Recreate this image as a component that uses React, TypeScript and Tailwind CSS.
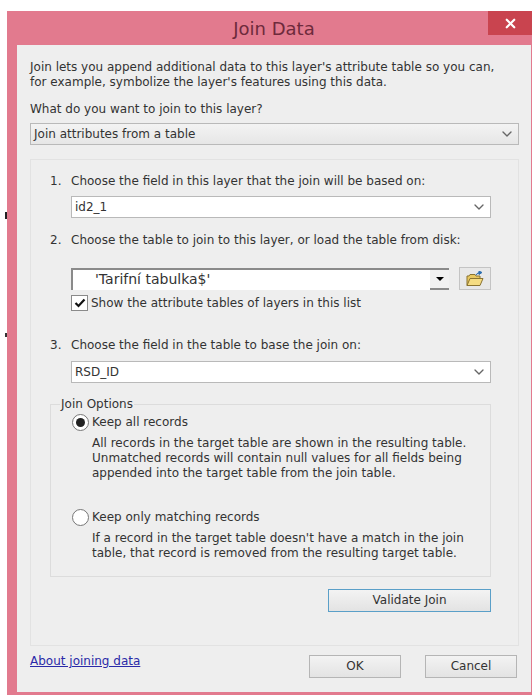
import { ChevronDown, X } from 'lucide-react';

const font = { fontFamily: '"DejaVu Sans", sans-serif' };

function Combo({ value, className = '' }: { value: string; className?: string }) {
  return (
    <div className={`flex h-[22px] items-center justify-between border border-[#b9b9b9] pl-[3px] pr-[3px] ${className}`}>
      <span>{value}</span>
      <ChevronDown size={16} strokeWidth={2} className="text-[#666]" />
    </div>
  );
}

function FolderIcon() {
  return (
    <svg width="18" height="16" viewBox="0 0 18 16">
      <path d="M1 14.500V5h2l1-1.500h5L10 5h4v2" fill="#e8c860" stroke="#8a7330" strokeWidth="1" />
      <path d="M1 14.500 4 7.500h13l-3 7z" fill="#f5dc82" stroke="#8a7330" strokeWidth="1" />
      <path d="M10 4c1-2 3-2.500 4.500-2.500M13 0l3 1.500-3 2z" fill="#2d6fb0" stroke="#2d6fb0" strokeWidth="1" />
    </svg>
  );
}

function Radio({ checked }: { checked?: boolean }) {
  return (
    <span className="flex h-[17px] w-[17px] shrink-0 items-center justify-center rounded-full border border-[#777] bg-white">
      {checked ? <span className="h-[9px] w-[9px] rounded-full bg-[#222]" /> : null}
    </span>
  );
}

function Button({ label, className = '' }: { label: string; className?: string }) {
  return (
    <button
      type="button"
      className={`flex h-[23px] items-center justify-center border bg-gradient-to-b from-[#f3f3f3] to-[#e3e3e3] ${className}`}
    >
      {label}
    </button>
  );
}

export default function App() {
  return (
    <div style={font} className="relative h-[695px] w-[532px] overflow-hidden bg-white pl-[7px] pt-[11px] text-[12px] leading-[15px] text-[#333]">
      {/* stray marks left of the window edge */}
      <span className="absolute left-[5px] top-[212px] h-[7px] w-[2px] bg-[#222]" />
      <span className="absolute left-[5px] top-[333px] h-[4px] w-[2px] bg-[#333]" />

      <div className="flex h-[684px] w-[525px] flex-col bg-[#e27a8e] pb-[3px] pl-[10px] pr-[1px]">
        {/* title bar */}
        <div className="relative flex h-[34px] shrink-0 items-center justify-center pt-[1px] text-[18px] text-[#6e2a3c]">
          Join Data
          <div className="absolute right-[-1px] top-0 flex h-[24px] w-[44px] items-center justify-center bg-[#c9444f]">
            <X size={15} strokeWidth={3.5} className="text-white" />
          </div>
        </div>

        <div className="flex flex-1 flex-col bg-[#eeeeee] pl-[13px] pr-[12px]">
          <p className="mt-[15px] whitespace-nowrap">
            Join lets you append additional data to this layer's attribute table so you can,
            <br />
            for example, symbolize the layer's features using this data.
          </p>
          <p className="mt-[12px]">What do you want to join to this layer?</p>
          <Combo value="Join attributes from a table" className="mt-[6px] bg-gradient-to-b from-[#f3f3f3] to-[#e6e6e6]" />

          {/* numbered steps */}
          <div className="mt-[14px] flex h-[487px] flex-col border border-[#e2e2e2] pl-[19px] pr-[27px]">
            <div className="mt-[14px] flex">
              <span className="w-[21px]">1.</span>
              <span>Choose the field in this layer that the join will be based on:</span>
            </div>
            <Combo value="id2_1" className="ml-[21px] mt-[7px] bg-white" />

            <div className="mt-[15px] flex">
              <span className="w-[21px]">2.</span>
              <span>Choose the table to join to this layer, or load the table from disk:</span>
            </div>
            <div className="ml-[21px] mt-[19px] flex items-center justify-between">
              <div className="flex h-[22px] w-[378px] items-center justify-between border-l-2 border-t-2 border-[#8a8a8a] bg-white pl-[22px] text-[14px]">
                <span>'Tarifní tabulka$'</span>
                <div className="flex h-[20px] w-[19px] items-center justify-center border-b-2 border-[#8a8a8a] bg-[#f1f1f1]">
                  <span className="h-0 w-0 border-x-[4px] border-t-[4px] border-x-transparent border-t-black" />
                </div>
              </div>
              <div className="flex h-[23px] w-[32px] items-center justify-center border border-[#c4c4c4] bg-[#e8e8e8]">
                <FolderIcon />
              </div>
            </div>
            <div className="ml-[21px] mt-[5px] flex items-center gap-[3px]">
              <span className="flex h-[16px] w-[17px] items-center justify-center border border-[#8a8a8a] bg-white">
                <svg width="12" height="10" viewBox="0 0 12 10">
                  <path d="M1.500 5 4.500 8 10.500 1.500" fill="none" stroke="#111" strokeWidth="2.200" />
                </svg>
              </span>
              <span>Show the attribute tables of layers in this list</span>
            </div>

            <div className="mt-[27px] flex">
              <span className="w-[21px]">3.</span>
              <span>Choose the field in the table to base the join on:</span>
            </div>
            <Combo value="RSD_ID" className="ml-[21px] mt-[8px] bg-white" />

            {/* join options group */}
            <fieldset className="mt-[14px] h-[180px] border border-[#dcdcdc] pl-[21px] pr-[10px]">
              <legend className="ml-[-12px] px-[1px]">Join Options</legend>
              <div className="mt-[2px] flex items-center gap-[3px]">
                <Radio checked />
                <span>Keep all records</span>
              </div>
              <p className="ml-[20px] mt-[5px] whitespace-nowrap">
                All records in the target table are shown in the resulting table.
                <br />
                Unmatched records will contain null values for all fields being
                <br />
                appended into the target table from the join table.
              </p>
              <div className="mt-[28px] flex items-center gap-[3px]">
                <Radio />
                <span>Keep only matching records</span>
              </div>
              <p className="ml-[20px] mt-[5px] whitespace-nowrap">
                If a record in the target table doesn't have a match in the join
                <br />
                table, that record is removed from the resulting target table.
              </p>
            </fieldset>

            <div className="mt-[12px] flex justify-end">
              <Button label="Validate Join" className="w-[163px] border-[#5a9fc8]" />
            </div>
          </div>

          {/* footer */}
          <div className="mt-[9px] flex items-start justify-between">
            <a href="#" className="-mt-[1px] text-[#2a2aa8] underline">
              About joining data
            </a>
            <div className="mr-[2px] flex gap-[24px]">
              <Button label="OK" className="w-[92px] border-[#b5b5b5]" />
              <Button label="Cancel" className="w-[92px] border-[#b5b5b5]" />
            </div>
          </div>
        </div>
      </div>
    </div>
  );
}
